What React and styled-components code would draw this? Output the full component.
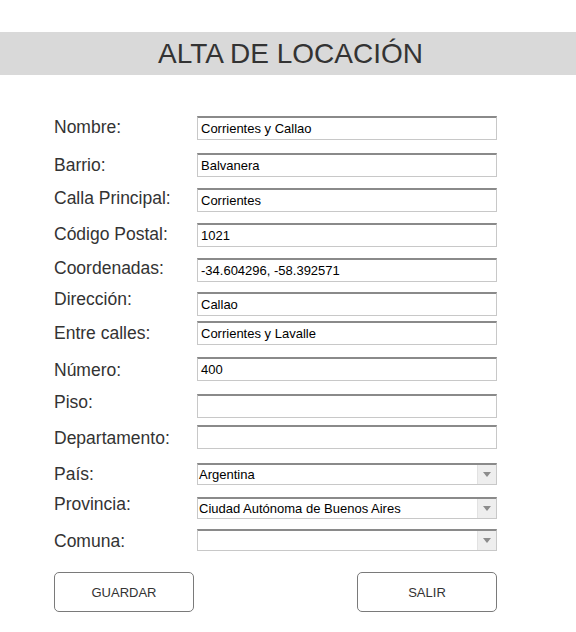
import React from "react";
import styled, { createGlobalStyle } from "styled-components";

const Global = createGlobalStyle`
  html, body { margin: 0; padding: 0; background: #fff; }
  body { font-family: "Liberation Sans", Arial, sans-serif; }
`;

const Page = styled.div`
  width: 576px;
  height: 632px;
  padding-top: 32px;
  box-sizing: border-box;
  background: #fff;
`;

const Header = styled.header`
  height: 43px;
  background: #d9d9d9;
  display: flex;
  align-items: center;
  justify-content: center;
  padding-left: 5px;
`;

const Title = styled.h1`
  margin: 0;
  font-weight: normal;
  font-size: 28px;
  color: #333;
  line-height: 1;
`;

const Form = styled.form`
  display: flex;
  flex-direction: column;
  padding: 0 0 0 54px;
  margin-top: 41px;
`;

const Row = styled.div`
  display: flex;
  align-items: flex-start;
  height: ${(p) => p.$h}px;
  margin-top: ${(p) => p.$gap}px;
`;

const Label = styled.label`
  width: 143px;
  flex: none;
  font-size: 17.5px;
  line-height: 20px;
  color: #333;
  margin-top: ${(p) => p.$off - 1}px;
`;

const TextBox = styled.div`
  width: 300px;
  height: 24px;
  box-sizing: border-box;
  border: 1px solid #c8c8c8;
  border-top: 2px solid #8a8a8a;
  display: flex;
  align-items: center;
  padding-left: 3px;
  font-size: 13px;
  color: #000;
  background: #fff;
`;

const SelectBox = styled.div`
  width: 300px;
  height: 22px;
  box-sizing: border-box;
  border: 1px solid #c8c8c8;
  border-top: 2px solid #8a8a8a;
  display: flex;
  align-items: center;
  font-size: 13px;
  color: #000;
  background: #fff;
`;

const SelectText = styled.span`
  flex: 1;
  padding-left: 1px;
`;

const Arrow = styled.span`
  width: 18px;
  height: 100%;
  background: #eeeeee;
  border-left: 1px solid #e2e2e2;
  display: flex;
  align-items: center;
  justify-content: center;
  &::after {
    content: "";
    border-left: 4px solid transparent;
    border-right: 4px solid transparent;
    border-top: 5px solid #8c8c8c;
  }
`;

const Buttons = styled.div`
  display: flex;
  justify-content: space-between;
  width: 443px;
  margin-top: 21px;
`;

const Button = styled.button`
  width: 140px;
  height: 40px;
  box-sizing: border-box;
  border: 1px solid #7a7a7a;
  border-radius: 5px;
  background: #fff;
  font-family: "Liberation Sans", Arial, sans-serif;
  font-size: 13px;
  color: #333;
  padding: 0;
`;

const fields = [
  { label: "Nombre:", value: "Corrientes y Callao", gap: 0, off: 2 },
  { label: "Barrio:", value: "Balvanera", gap: 13, off: 3 },
  { label: "Calla Principal:", value: "Corrientes", gap: 11, off: 1 },
  { label: "Código Postal:", value: "1021", gap: 11, off: 2 },
  { label: "Coordenadas:", value: "-34.604296, -58.392571", gap: 11, off: 1 },
  { label: "Dirección:", value: "Callao", gap: 10, off: -2 },
  { label: "Entre calles:", value: "Corrientes y Lavalle", gap: 5, off: 3 },
  { label: "Número:", value: "400", gap: 12, off: 4 },
  { label: "Piso:", value: "", gap: 13, off: -1 },
  { label: "Departamento:", value: "", gap: 7, off: 4 },
  { label: "País:", value: "Argentina", gap: 14, off: 2, select: true },
  { label: "Provincia:", value: "Ciudad Autónoma de Buenos Aires", gap: 12, off: -2, select: true },
  { label: "Comuna:", value: "", gap: 10, off: 3, select: true },
];

export default function App() {
  return (
    <Page>
      <Global />
      <Header>
        <Title>ALTA DE LOCACIÓN</Title>
      </Header>
      <Form>
        {fields.map((f) => (
          <Row key={f.label} $h={f.select ? 22 : 24} $gap={f.gap}>
            <Label $off={f.off}>{f.label}</Label>
            {f.select ? (
              <SelectBox>
                <SelectText>{f.value}</SelectText>
                <Arrow />
              </SelectBox>
            ) : (
              <TextBox>{f.value}</TextBox>
            )}
          </Row>
        ))}
        <Buttons>
          <Button type="button">GUARDAR</Button>
          <Button type="button">SALIR</Button>
        </Buttons>
      </Form>
    </Page>
  );
}
